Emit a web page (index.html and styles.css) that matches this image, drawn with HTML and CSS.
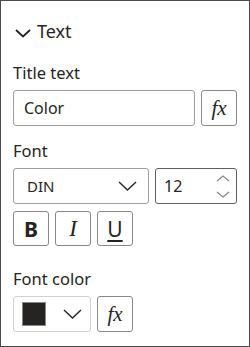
FILE: index.html
```html
<!DOCTYPE html>
<html lang="en">
<head>
    <meta charset="UTF-8">
    <title>Text format pane</title>
    <link rel="stylesheet" href="styles.css">
</head>
<body>
    <div class="pane">
        <div class="section-head">
            <svg class="chev" width="16" height="10" viewBox="0 0 16 10">
                <path d="M1 2 L8 8.5 L15 2" fill="none" stroke="#252423" stroke-width="1.8"/>
            </svg>
            <span>Text</span>
        </div>

        <div class="label first">Title text</div>
        <div class="row">
            <div class="field wide">Color</div>
            <button class="btn fx">fx</button>
        </div>

        <div class="label">Font</div>
        <div class="row">
            <div class="field select">
                <span class="din">DIN</span>
                <svg width="19" height="10" viewBox="0 0 19 10">
                    <path d="M1 1 L9.5 9 L18 1" fill="none" stroke="#252423" stroke-width="1.4"/>
                </svg>
            </div>
            <div class="field number">
                <span>12</span>
                <div class="spin">
                    <svg width="14" height="7" viewBox="0 0 14 7"><path d="M1 6 L7 1 L13 6" fill="none" stroke="#8a8886" stroke-width="1.3"/></svg>
                    <svg width="14" height="7" viewBox="0 0 14 7"><path d="M1 1 L7 6 L13 1" fill="none" stroke="#8a8886" stroke-width="1.3"/></svg>
                </div>
            </div>
        </div>
        <div class="row styles">
            <button class="btn bold">B</button>
            <button class="btn italic">I</button>
            <button class="btn under">U</button>
        </div>

        <div class="label last">Font color</div>
        <div class="row">
            <div class="field color">
                <span class="swatch"></span>
                <svg width="19" height="10" viewBox="0 0 19 10">
                    <path d="M1 1 L9.5 9 L18 1" fill="none" stroke="#252423" stroke-width="1.4"/>
                </svg>
            </div>
            <button class="btn fx">fx</button>
        </div>
    </div>
</body>
</html>
```

FILE: styles.css
```css
body {
    margin: 0;
    font-family: "Noto Sans", sans-serif;
    color: #252423;
    background: #fff;
}
.pane {
    width: 250px;
    height: 347px;
    box-sizing: border-box;
    border: 1px solid #4a4a4a;
    padding: 0 12px;
}
.section-head {
    display: flex;
    align-items: center;
    margin-top: 19px;
    height: 22px;
    font-size: 18px;
    font-weight: 400;
}
.chev { margin: 4px 6px 0 2px; }
.label {
    font-size: 16.5px;
    line-height: 20px;
    margin-top: 15px;
}
.label.first { margin-top: 21px; }
.label.last { margin-top: 23px; }
.row {
    display: flex;
    gap: 6px;
    margin-top: 7px;
}
.field {
    box-sizing: border-box;
    height: 36px;
    border: 1px solid #a19f9d;
    border-radius: 3px;
    display: flex;
    align-items: center;
    font-size: 16px;
}
.wide { width: 182px; padding-left: 10px; }
.btn {
    box-sizing: border-box;
    width: 36px;
    height: 36px;
    padding: 0;
    background: #fff;
    border: 1px solid #8a8886;
    border-radius: 3px;
    color: #252423;
}
.fx {
    font-family: "Liberation Serif", serif;
    font-style: italic;
    font-size: 21px;
}
.select {
    width: 136px;
    justify-content: space-between;
    padding: 0 11px 0 13px;
}
.din { font-size: 15px; }
.number {
    width: 82px;
    border: 1.5px solid #605e5c;
    justify-content: space-between;
    padding: 0 6px 0 8px;
}
.spin { display: flex; flex-direction: column; gap: 9px; }
.spin svg { display: block; }
.styles .btn { height: 35px; }
.bold { font-family: "Noto Sans", sans-serif; font-weight: 700; font-size: 21px; }
.italic { font-family: "Liberation Serif", serif; font-style: italic; font-size: 23px; }
.under { font-family: "Noto Sans", sans-serif; font-size: 21px; text-decoration: underline; text-underline-offset: 3px; }
.color {
    width: 78px;
    border-color: #d2d0ce;
    justify-content: space-between;
    padding: 0 8px 0 8px;
}
.swatch {
    width: 22px;
    height: 22px;
    background: #252423;
    border: 1px solid #8a8886;
}
```
